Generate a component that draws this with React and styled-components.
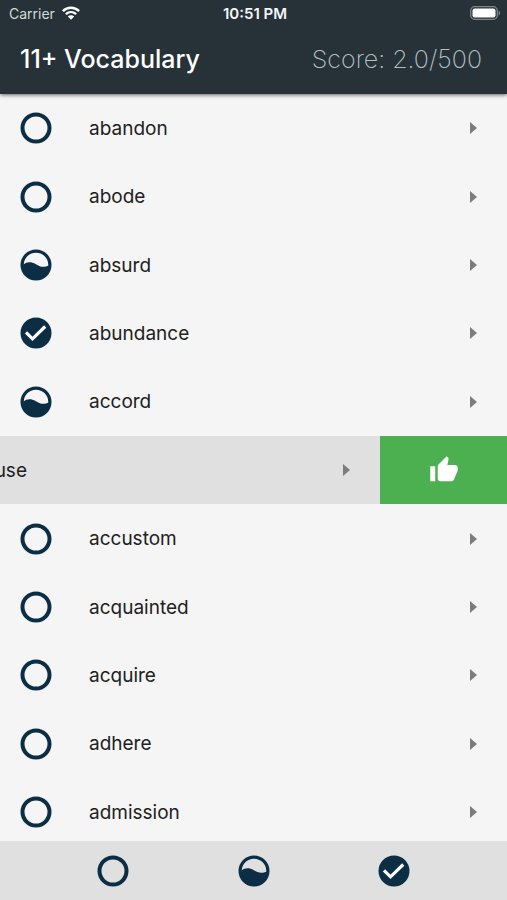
import React from "react";
import styled, { createGlobalStyle } from "styled-components";

const GlobalStyle = createGlobalStyle`
  body {
    margin: 0;
    font-family: Inter, "Liberation Sans", sans-serif;
    background-color: #f5f5f5;
  }
`;

const Screen = styled.div`
  height: 100vh;
  display: flex;
  flex-direction: column;
`;

const Header = styled.header`
  background-color: #263238;
  box-shadow: 0 1px 4px rgba(0, 0, 0, 0.6);
  z-index: 1;
`;

const StatusBar = styled.div`
  height: 26px;
  display: grid;
  grid-template-columns: 1fr auto 1fr;
  align-items: center;
  padding: 0 6px 0 9px;
  font-size: 14px;
  color: #d4dadc;
`;

const Carrier = styled.span`
  display: flex;
  align-items: center;
  gap: 7px;
`;

const Clock = styled.time`
  font-size: 15px;
  font-weight: 600;
  color: #f4f6f7;
`;

const Battery = styled.svg`
  justify-self: end;
`;

const TitleBar = styled.div`
  height: 66px;
  display: flex;
  align-items: center;
  justify-content: space-between;
  padding: 0 25px 2px 20px;
`;

const Title = styled.h1`
  margin: 0;
  font-size: 25px;
  font-weight: 500;
  color: white;
`;

const Score = styled.span`
  font-size: 25px;
  font-weight: 200;
  color: #b4c0c4;
`;

const WordList = styled.ul`
  flex: 1;
  min-height: 0;
  margin: 0;
  padding: 0;
  list-style: none;
  overflow: auto;
  scrollbar-width: none;
  display: grid;
  grid-auto-rows: 68px 69px 68px 68px 69px;
`;

const WordItem = styled.li`
  display: flex;
  overflow: hidden;
`;

const WordButton = styled.button`
  flex: 0 0 100%;
  margin-left: ${(props) => (props.$swiped ? "-25%" : "0")};
  display: flex;
  align-items: center;
  padding: 0 30px 0 20px;
  border: none;
  background-color: ${(props) => (props.$swiped ? "#e0e0e0" : "transparent")};
  font: inherit;
  font-size: 19px;
  text-align: left;
  color: #212121;
`;

const Word = styled.span`
  flex: 1;
  margin-left: 37px;
`;

const KnownButton = styled.button`
  flex: 0 0 25%;
  display: flex;
  align-items: center;
  justify-content: center;
  padding: 0;
  border: none;
  background-color: #4caf50;
`;

const Footer = styled.footer`
  height: 59px;
  display: flex;
  align-items: center;
  justify-content: space-evenly;
  background-color: #e0e0e0;
`;

const FilterButton = styled.button`
  width: 56px;
  height: 56px;
  display: flex;
  align-items: center;
  justify-content: center;
  padding: 0;
  border: none;
  background: none;
`;

const words = [
  { text: "abandon", status: "new" },
  { text: "abode", status: "new" },
  { text: "absurd", status: "learning" },
  { text: "abundance", status: "known" },
  { text: "accord", status: "learning" },
  { text: "accuse", status: "new", swiped: true },
  { text: "accustom", status: "new" },
  { text: "acquainted", status: "new" },
  { text: "acquire", status: "new" },
  { text: "adhere", status: "new" },
  { text: "admission", status: "new" },
];

function StatusIcon({ status }) {
  return (
    <svg width="32" height="32" viewBox="0 0 32 32" aria-hidden="true">
      {status === "new" && (
        <circle
          cx="16"
          cy="16"
          r="13.5"
          fill="none"
          stroke="#0b2e45"
          strokeWidth="4"
        />
      )}
      {status === "learning" && (
        <>
          <circle
            cx="16"
            cy="16"
            r="13.9"
            fill="none"
            stroke="#0b2e45"
            strokeWidth="3.2"
          />
          <path
            d="M3 15.8C7 12.4 11.5 12.6 15.5 15C19.5 17.5 23 19.2 29 16.5C29 24 23 30 16 30C9 30 3 24 3 15.8Z"
            fill="#0b2e45"
          />
        </>
      )}
      {status === "known" && (
        <>
          <circle cx="16" cy="16" r="15.5" fill="#0b2e45" />
          <path
            d="M6 15.3L12.5 21.8L25.2 9.5"
            fill="none"
            stroke="white"
            strokeWidth="3.2"
          />
        </>
      )}
    </svg>
  );
}

function WifiIcon() {
  return (
    <svg width="18" height="14" viewBox="0 0 18 14" aria-hidden="true">
      <g fill="none" stroke="white" strokeWidth="2.4">
        <path d="M0.9 5.1C5.5 0.6 12.5 0.6 17.1 5.1" />
        <path d="M3.9 8.2C6.9 5.4 11.1 5.4 14.1 8.2" />
      </g>
      <path d="M5.8 10.4C7.7 8.7 10.3 8.7 12.2 10.4L9 13.7Z" fill="white" />
    </svg>
  );
}

function App() {
  return (
    <Screen>
      <GlobalStyle />
      <Header>
        <StatusBar>
          <Carrier>
            Carrier
            <WifiIcon />
          </Carrier>
          <Clock>10:51 PM</Clock>
          <Battery width="31" height="14" viewBox="0 0 31 14">
            <rect
              x="0.7"
              y="0.7"
              width="26.6"
              height="12.6"
              rx="4"
              fill="none"
              stroke="#7d868a"
              strokeWidth="1.3"
            />
            <rect x="2.5" y="2.5" width="23" height="9" rx="2" fill="white" />
            <path d="M28.7 4.7C30.6 5.4 30.6 8.6 28.7 9.3Z" fill="#7d868a" />
          </Battery>
        </StatusBar>
        <TitleBar>
          <Title>11+ Vocabulary</Title>
          <Score>Score: 2.0/500</Score>
        </TitleBar>
      </Header>
      <WordList>
        {words.map((word) => (
          <WordItem key={word.text}>
            <WordButton $swiped={word.swiped}>
              <StatusIcon status={word.status} />
              <Word>{word.text}</Word>
              <svg width="7" height="12" viewBox="0 0 7 12" aria-hidden="true">
                <path d="M0 0L7 6L0 12Z" fill="#7c7c7c" />
              </svg>
            </WordButton>
            {word.swiped && (
              <KnownButton aria-label="Mark as known">
                <svg width="30" height="30" viewBox="0 0 24 24">
                  <path
                    d="M1 21h4V9H1v12zm22-11c0-1.1-.9-2-2-2h-6.31l.95-4.57.03-.32c0-.41-.17-.79-.44-1.06L14.17 1 7.59 7.59C7.22 7.95 7 8.45 7 9v10c0 1.1.9 2 2 2h9c.83 0 1.54-.5 1.84-1.22l3.02-7.05c.09-.23.14-.47.14-.73v-2z"
                    fill="white"
                  />
                </svg>
              </KnownButton>
            )}
          </WordItem>
        ))}
      </WordList>
      <Footer>
        <FilterButton aria-label="New words">
          <StatusIcon status="new" />
        </FilterButton>
        <FilterButton aria-label="Words in progress">
          <StatusIcon status="learning" />
        </FilterButton>
        <FilterButton aria-label="Known words">
          <StatusIcon status="known" />
        </FilterButton>
      </Footer>
    </Screen>
  );
}

export default App;
